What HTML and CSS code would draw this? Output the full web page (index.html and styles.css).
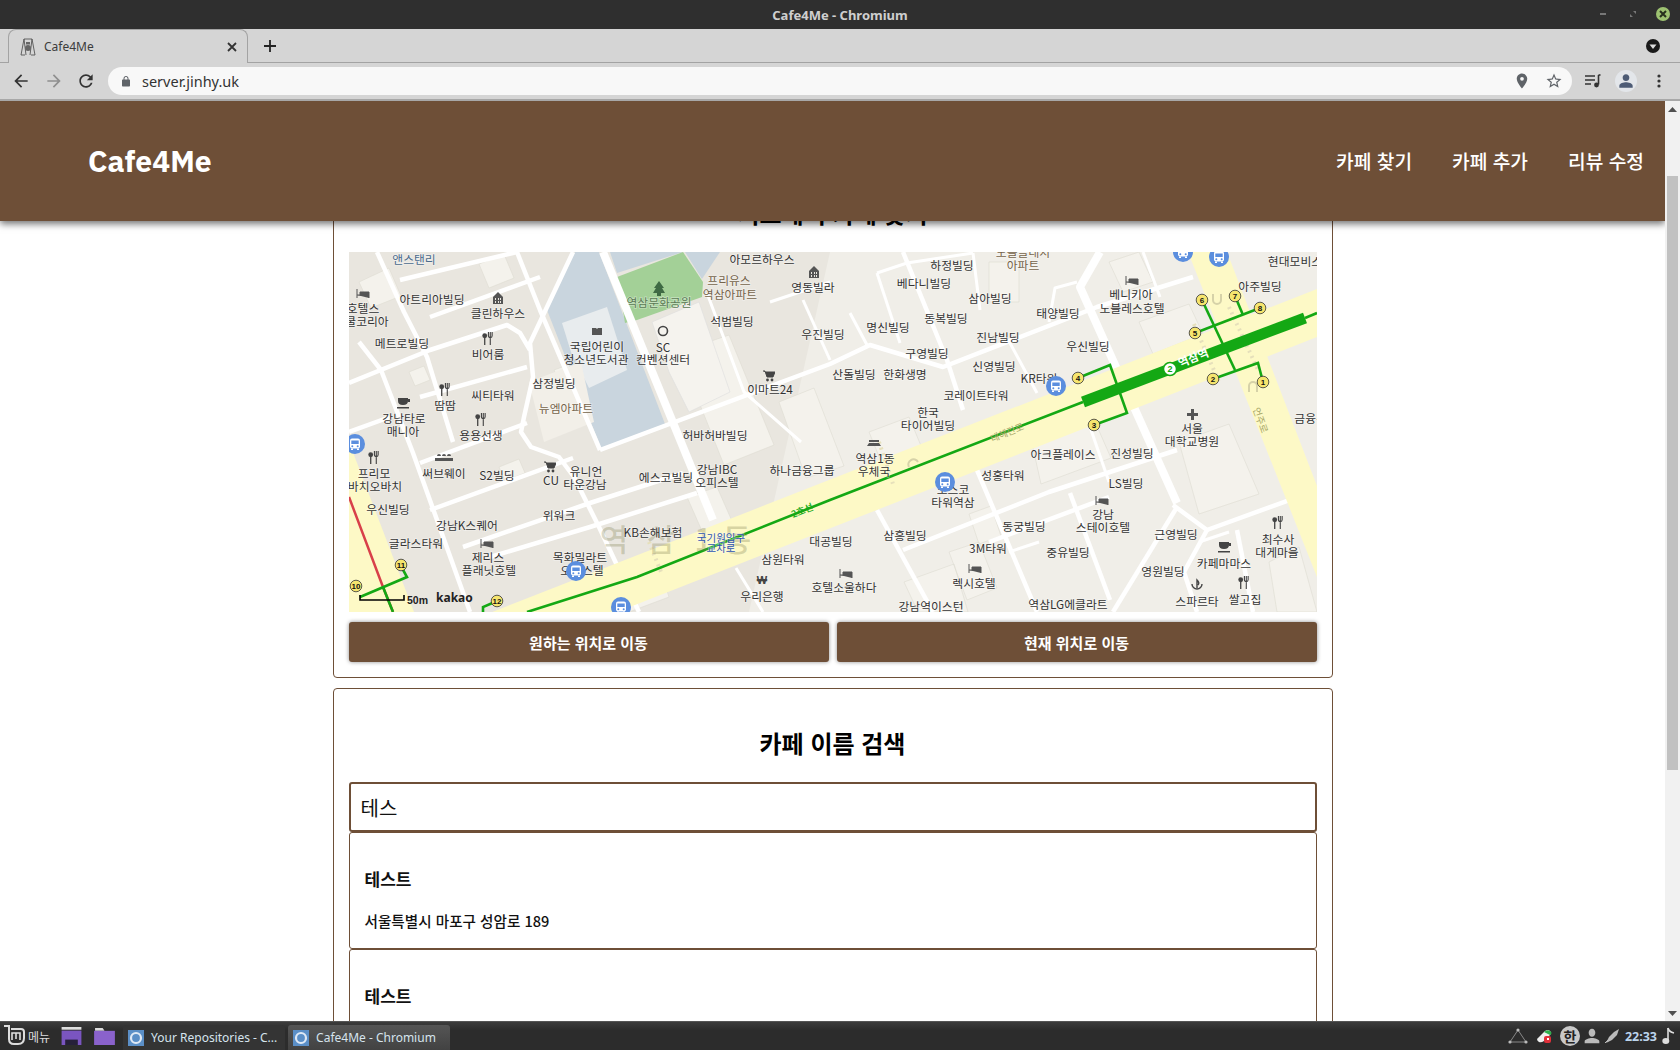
FILE: index.html
```html
<!DOCTYPE html>
<html lang="ko">
<head>
<meta charset="utf-8">
<title>Cafe4Me - Chromium</title>
<link rel="stylesheet" href="styles.css">
</head>
<body>
<div class="desktop">
  <div class="titlebar">
    <span class="title-text">Cafe4Me - Chromium</span>
    <div class="winctl">
      <svg width="14" height="14" viewBox="0 0 14 14"><rect x="4" y="6" width="6" height="2" fill="#777"/></svg>
      <svg width="14" height="14" viewBox="0 0 14 14"><path d="M7 4h3v3zM4 7l3 3H4z" fill="#777"/></svg>
      <svg class="closebtn" width="16" height="16" viewBox="0 0 16 16"><circle cx="8" cy="8" r="7" fill="#9dc271"/><path d="M5 5l6 6M11 5l-6 6" stroke="#26301c" stroke-width="2"/></svg>
    </div>
  </div>

  <div class="tabstrip">
    <div class="tab">
      <svg width="16" height="18" viewBox="0 0 16 18"><path d="M1 17L4 1h8l3 16M1 17h4M11 17h4M4 1l2 16M12 1l-2 16" fill="none" stroke="#555" stroke-width=".9"/><circle cx="8" cy="10" r="3" fill="#666"/><rect x="6" y="4" width="4" height="2.5" fill="#666"/></svg>
      <span class="tab-title">Cafe4Me</span>
      <svg class="tab-x" width="10" height="10" viewBox="0 0 10 10"><path d="M1 1l8 8M9 1l-8 8" stroke="#333" stroke-width="1.8"/></svg>
    </div>
    <svg class="newtab" width="14" height="14" viewBox="0 0 14 14"><path d="M7 1v12M1 7h12" stroke="#222" stroke-width="1.8"/></svg>
    <svg class="tabsearch" width="14" height="14" viewBox="0 0 14 14"><circle cx="7" cy="7" r="7" fill="#1a1a1a"/><path d="M3.5 5.500h7L7 10z" fill="#ddd"/></svg>
  </div>

  <div class="toolbar">
    <svg class="tb-btn" width="20" height="20" viewBox="0 0 24 24"><path d="M20 11H7.83l5.59-5.59L12 4l-8 8 8 8 1.41-1.41L7.83 13H20v-2z" fill="#333"/></svg>
    <svg class="tb-btn fwd" width="20" height="20" viewBox="0 0 24 24"><path d="M12 4l-1.41 1.41L16.17 11H4v2h12.17l-5.58 5.59L12 20l8-8z" fill="#8f8f8f"/></svg>
    <svg class="tb-btn" width="20" height="20" viewBox="0 0 24 24"><path d="M17.65 6.35C16.2 4.9 14.21 4 12 4c-4.42 0-7.99 3.58-7.99 8s3.57 8 7.99 8c3.73 0 6.84-2.55 7.73-6h-2.08c-.82 2.33-3.04 4-5.65 4-3.31 0-6-2.69-6-6s2.69-6 6-6c1.66 0 3.14.69 4.22 1.78L13 11h7V4l-2.35 2.35z" fill="#333"/></svg>
    <div class="omnibox">
      <svg width="12" height="13" viewBox="0 0 24 24"><path d="M18 8h-1V6c0-2.76-2.24-5-5-5S7 3.24 7 6v2H6c-1.1 0-2 .9-2 2v10c0 1.1.9 2 2 2h12c1.1 0 2-.9 2-2V10c0-1.1-.9-2-2-2zM9 6c0-1.66 1.34-3 3-3s3 1.34 3 3v2H9V6z" fill="#5f6368"/></svg>
      <span class="url">server.jinhy.uk</span>
      <svg class="omni-pin" width="18" height="18" viewBox="0 0 24 24"><path d="M12 2C8.13 2 5 5.13 5 9c0 5.25 7 13 7 13s7-7.75 7-13c0-3.87-3.13-7-7-7zm0 9.5a2.5 2.5 0 010-5 2.5 2.5 0 010 5z" fill="#5f6368"/></svg>
      <svg width="18" height="18" viewBox="0 0 24 24"><path d="M22 9.24l-7.19-.62L12 2 9.19 8.63 2 9.24l5.46 4.73L5.82 21 12 17.27 18.18 21l-1.63-7.03L22 9.24zM12 15.4l-3.76 2.27 1-4.28-3.32-2.88 4.38-.38L12 6.1l1.71 4.04 4.38.38-3.32 2.88 1 4.28L12 15.4z" fill="#5f6368"/></svg>
    </div>
    <svg class="tb-queue" width="16" height="14" viewBox="0 0 16 14"><path d="M0 2h10M0 6h10M0 10h6" stroke="#333" stroke-width="1.6"/><path d="M13.5 1v9.5" stroke="#333" stroke-width="1.6"/><path d="M13.5 1h2" stroke="#333" stroke-width="1.6"/><circle cx="11.5" cy="11" r="2.4" fill="#333"/></svg>
    <div class="avatar"><svg width="16" height="16" viewBox="0 0 24 24"><path d="M12 12c2.9 0 5-2.100 5-5s-2.100-5-5-5-5 2.100-5 5 2.100 5 5 5zm0 2c-3.300 0-10 1.700-10 5v3h20v-3c0-3.300-6.700-5-10-5z" fill="#4d5b75"/></svg></div>
    <svg class="tb-dots" width="4" height="14" viewBox="0 0 4 14"><circle cx="2" cy="2" r="1.6" fill="#333"/><circle cx="2" cy="7" r="1.6" fill="#333"/><circle cx="2" cy="12" r="1.6" fill="#333"/></svg>
  </div>

  <div class="viewport">
    <div class="scroller">
      <header class="site-header">
        <div class="logo">Cafe4Me</div>
        <nav class="nav">
          <a class="nav-link">카페 찾기</a>
          <a class="nav-link">카페 추가</a>
          <a class="nav-link">리뷰 수정</a>
        </nav>
      </header>
      <main class="main">
        <section class="card">
          <h2 class="card-title">지도에서 카페 찾기</h2>
          <div class="map">
            <svg class="map-svg" width="968" height="360" viewBox="0 0 968 360">
              <defs>
                <symbol id="bed" viewBox="0 0 14 10"><path d="M1 0v9M1 6h12v3M4 3h9v3H4z" fill="#555" stroke="#555" stroke-width="1"/></symbol>
                <symbol id="fork" viewBox="0 0 14 14"><circle cx="4" cy="4" r="2.6" fill="#444"/><path d="M4 4v10" stroke="#444" stroke-width="1.4"/><path d="M8 0v4q0 2 2 2t2-2V0M10 0v14" fill="none" stroke="#444" stroke-width="1.2"/></symbol>
                <symbol id="cup" viewBox="0 0 14 12"><path d="M1 1h10v3q0 4-5 4t-5-4zM11 2h2v3h-2M0 10h12v1.500H0z" fill="#444"/></symbol>
                <symbol id="bld" viewBox="0 0 10 12"><path d="M0 12V5l5-5 5 5v7z" fill="#555"/><path d="M2 6h1v2H2zM5 6h1v2H5zM7 6h1v2H7zM2 9h1v2H2zM5 9h1v2H5zM7 9h1v2H7z" fill="#e9e6df"/></symbol>
                <symbol id="cart" viewBox="0 0 12 12"><path d="M0 1h2l2 6h6l2-5H3" fill="#444" stroke="#444"/><circle cx="4.500" cy="10" r="1.400" fill="#444"/><circle cx="9" cy="10" r="1.400" fill="#444"/></symbol>
                <symbol id="bus" viewBox="0 0 20 20"><circle cx="10" cy="10" r="10" fill="#5b8ede"/><rect x="5" y="4.500" width="10" height="10" rx="2" fill="#fff"/><rect x="6.300" y="6.500" width="7.400" height="3.500" fill="#5b8ede"/><circle cx="7.300" cy="12.300" r="1" fill="#5b8ede"/><circle cx="12.700" cy="12.300" r="1" fill="#5b8ede"/><path d="M6 14.500h2v1.500H6zM12 14.500h2v1.500h-2z" fill="#fff"/></symbol>
              </defs>
              <rect class="m-ground" width="968" height="360"/>
              <path class="m-ground2" d="M481 0H968V360H400Z"/>
              <!-- plots -->
              <g class="m-plot">
                <path d="M330 100l50-17 45 110-50 20zM430 150l35-14 30 78-38 12zM520 180l40-15 25 60-40 16zM10 30l30-14 12 28-30 12zM130 12l25-10 10 24-25 10zM205 118l22-8 8 18-22 8zM338 245l30-10 15 34-30 10zM790 70l50-18 14 30-50 20zM600 300l30-10 18 46-30 12zM680 178l60-22 22 50-70 26zM830 190l50-18 30 70-60 20zM555 330l50-18 14 48h-50zM640 10h30v40h-30zM760 10l30-10 14 30-30 10zM920 310l30-15 18 65h-40zM620 262l22-8 10 30-22 8zM60 120l15-6 6 14-15 6zM150 215l20-8 6 14-20 8zM270 330l40-15 10 30-40 15z"/>
              </g>
              <!-- water-ish and park -->
              <path class="m-blue" d="M226 0H250L316 172 252 196 198 58ZM261 0H334L268 21ZM336 0H371L353 27Z"/>
              <path class="m-green" d="M268 25L334 0 354 30 353 45 288 68 276 71Z"/>
              <path class="m-lib" d="M213 71L258 55 278 118 240 136 222 100Z"/>
              <path class="m-white-plot" d="M303 70L350 50 381 140 340 160 320 120Z"/>
              <path class="m-ivory" d="M180 130L232 110 245 170 195 190Z"/>
              <!-- roads -->
              <g class="m-road w6">
                <path d="M28 0L55 60 78 105 104 190"/>
                <path d="M10 90L32 118 64 201 121 360"/>
                <path d="M168 0L191 58 251 198"/>
                <path d="M224 0L181 91 184 125 175 165 172 180 182 195 210 205 225 225 250 275 290 360"/>
                <path d="M0 131L81 98 158 73 171 81 181 98"/>
                <path d="M71 211L178 171"/>
                <path d="M251 198L481 112 521 93 594 115 748 55 844 25"/>
                <path d="M81 258L224 206"/>
                <path d="M114 295L241 251 334 221"/>
                <path d="M141 305L241 275 348 241"/>
                <path d="M71 145L178 115"/>
                <path d="M51 28L168 0"/>
                <path d="M81 65L191 25"/>
                <path d="M0 180L41 165"/>
                <path d="M554 0L598 108 614 158"/>
                <path d="M528 258L584 360"/>
                <path d="M628 218L688 360"/>
                <path d="M554 298L700 240 828 198"/>
                <path d="M824 253L858 278 968 238"/>
                <path d="M828 255L764 360"/>
                <path d="M858 278L835 320 848 360"/>
                <path d="M888 278L904 360"/>
                <path d="M721 241L761 348"/>
                <path d="M640 290L760 245"/>
              </g>
              <g class="m-road w9">
                <path d="M254 0L364 268"/>
                <path d="M751 0L731 35 828 251"/>
              </g>
              <g class="m-road w4">
                <path d="M358 41L395 140 452 190"/>
                <path d="M421 50L481 30"/>
                <path d="M454 48L481 108"/>
                <path d="M387 316L414 360"/>
                <path d="M528 21L558 11 624 1"/>
                <path d="M528 21L551 91"/>
                <path d="M501 61L518 93"/>
                <path d="M624 1L631 58"/>
                <path d="M661 91L688 141"/>
                <path d="M794 0L811 45"/>
                <path d="M700 70L706 36 728 30"/>
                <path d="M740 172L760 230"/>
                <path d="M850 290L880 280"/>
                <path d="M660 300L690 290"/>
              </g>
              <!-- avenues -->
              <path class="m-ave" d="M105 375L968 37V85L230 375Z"/>
              <path class="m-ave" d="M839 0H878L968 234V325Z"/>
              <path class="m-ave" d="M0 190L65 360H0Z"/>
              <path class="m-zebra" d="M845 72L870 130M880 55L910 120M530 190L545 235M300 290L312 320"/>
              <path class="m-uturn" d="M864 42v6a4 4 0 008 0v-6M900 140v-6a4 4 0 018 0v6M560 215a5 5 0 019-5"/>
              <!-- rail -->
              <path class="m-red" d="M0 245L34 335 44 360"/>
              <g class="m-line">
                <path d="M178 360L288 325 481 248 734 150"/>
                <path d="M956 66L968 61"/>
                <path d="M134 360V355L148 349"/>
                <path d="M34 335L44 360"/>
                <path d="M11 345L58 325 53 316"/>
                <path d="M729 126L761 113 778 161 745 173"/>
                <path d="M846 81L911 56"/>
                <path d="M853 48L886 118"/>
                <path d="M886 44L894 63"/>
                <path d="M864 127L909 111 914 130"/>
              </g>
              <path class="m-thick" d="M734 150L956 66"/>
              <circle class="m-st" cx="821" cy="117" r="6.500"/>
              <text class="m-stn" x="821" y="117">2</text>
              <text class="m-stname" x="844" y="105" transform="rotate(-22 844 105)">역삼역</text>
              <!-- exits -->
              <g class="m-exit">
                <circle cx="914" cy="130" r="5.800"/><circle cx="864" cy="127" r="5.800"/><circle cx="745" cy="173" r="5.800"/><circle cx="729" cy="126" r="5.800"/><circle cx="846" cy="81" r="5.800"/><circle cx="853" cy="48" r="5.800"/><circle cx="886" cy="44" r="5.800"/><circle cx="911" cy="56" r="5.800"/><circle cx="7" cy="334" r="5.800"/><circle cx="52" cy="313" r="5.800"/><circle cx="148" cy="349" r="5.800"/>
              </g>
              <g class="m-exitnum">
                <text x="914" y="130">1</text><text x="864" y="127">2</text><text x="745" y="173">3</text><text x="729" y="126">4</text><text x="846" y="81">5</text><text x="853" y="48">6</text><text x="886" y="44">7</text><text x="911" y="56">8</text><text x="7" y="334">10</text><text x="52" y="313">11</text><text x="148" y="349">12</text>
              </g>
              <!-- district watermark -->
              <text class="m-district" x="265" y="299">역</text><text class="m-district" x="312" y="299">삼</text><text class="m-district" x="354" y="299">1</text><text class="m-district" x="388" y="299">동</text>
              <!-- POI icons -->
              <use href="#bed" x="7" y="37" width="14" height="10"/><use href="#bed" x="776" y="24" width="14" height="10"/><use href="#bed" x="131" y="287" width="14" height="10"/><use href="#bed" x="746" y="244" width="14" height="10"/><use href="#bed" x="619" y="312" width="14" height="10"/><use href="#bed" x="490" y="317" width="14" height="10"/>
              <use href="#fork" x="132" y="80" width="13" height="13"/><use href="#fork" x="89" y="131" width="13" height="13"/><use href="#fork" x="125" y="161" width="13" height="13"/><use href="#fork" x="18" y="199" width="13" height="13"/><use href="#fork" x="922" y="264" width="13" height="13"/><use href="#fork" x="888" y="324" width="13" height="13"/>
              <use href="#cup" x="48" y="145" width="14" height="12"/><use href="#cup" x="869" y="289" width="14" height="12"/>
              <use href="#bld" x="144" y="40" width="10" height="12"/><use href="#bld" x="460" y="14" width="10" height="12"/>
              <use href="#cart" x="414" y="118" width="12" height="12"/><use href="#cart" x="195" y="209" width="12" height="12"/>
              <path class="m-icon-green" d="M310 29l5 7h-2l3 5h-4v3h-4v-3h-4l3-5h-2z"/>
              <path class="m-icon" d="M243 76h4l1 1 1-1h4v7h-10z"/>
              <circle class="m-icon-ring" cx="314" cy="79" r="4.500"/>
              <path class="m-icon" d="M86 206h18v3H86zM88 204a2 2 0 014 0zM93 204a2 2 0 014 0zM98 204a2 2 0 014 0z"/>
              <path class="m-icon" d="M842 157h3v4h4v3h-4v4h-3v-4h-4v-3h4z"/>
              <path class="m-icon" d="M518 194h14l-2-3h-10zM520 188h10v2h-10z"/>
              <text class="m-won" x="413" y="332">₩</text>
              <path class="m-spa" d="M843 332a5 5 0 0010 0M848 336v-8q3 3 1 5"/>
              <!-- labels -->
              <g class="m-label">
                <text class="blue" x="65" y="6">앤스탠리</text>
                <text x="413" y="6">아모르하우스</text>
                <text class="brown" x="380" y="27">프리유스</text>
                <text class="brown" x="381" y="41">역삼아파트</text>
                <text x="464" y="34">영동빌라</text>
                <text class="park" x="310" y="49">역삼문화공원</text>
                <text x="14" y="55">호텔스</text>
                <text x="18" y="68">쿨코리아</text>
                <text x="83" y="46">아트리아빌딩</text>
                <text x="149" y="60">클린하우스</text>
                <text x="383" y="68">석범빌딩</text>
                <text x="53" y="90">메트로빌딩</text>
                <text x="139" y="101">비어룸</text>
                <text x="474" y="81">우진빌딩</text>
                <text x="248" y="93">국립어린이</text>
                <text x="247" y="106">청소년도서관</text>
                <text x="314" y="94">SC</text>
                <text x="314" y="106">컨벤션센터</text>
                <text x="205" y="130">삼정빌딩</text>
                <text x="421" y="136">이마트24</text>
                <text x="144" y="142">씨티타워</text>
                <text x="96" y="152">땀땀</text>
                <text class="brown" x="217" y="155">뉴엠아파트</text>
                <text x="55" y="165">강남타로</text>
                <text x="54" y="178">매니아</text>
                <text x="132" y="182">용용선생</text>
                <text x="366" y="182">허바허바빌딩</text>
                <text x="25" y="220">프리모</text>
                <text x="26" y="233">바치오바치</text>
                <text x="95" y="220">써브웨이</text>
                <text x="148" y="222">S2빌딩</text>
                <text x="202" y="227">CU</text>
                <text x="237" y="218">유니언</text>
                <text x="236" y="231">타운강남</text>
                <text x="317" y="224">에스코빌딩</text>
                <text x="368" y="216">강남IBC</text>
                <text x="368" y="229">오피스텔</text>
                <text x="453" y="217">하나금융그룹</text>
                <text x="39" y="256">우신빌딩</text>
                <text x="210" y="262">위워크</text>
                <text x="118" y="272">강남K스퀘어</text>
                <text x="304" y="279">KB손해보험</text>
                <text x="67" y="290">글라스타워</text>
                <text x="139" y="304">제리스</text>
                <text x="140" y="317">플래닛호텔</text>
                <text x="231" y="304">목화밀라트</text>
                <text x="233" y="317">오피스텔</text>
                <text class="blue2" x="372" y="285">국기원입구</text>
                <text class="blue2" x="372" y="295">교차로</text>
                <text x="434" y="306">삼원타워</text>
                <text x="482" y="288">대공빌딩</text>
                <text x="413" y="343">우리은행</text>
                <text x="495" y="334">호텔소울하다</text>
                <text x="603" y="12">하정빌딩</text>
                <text class="brown" x="674" y="-1">노블클래시</text>
                <text class="brown" x="674" y="12">아파트</text>
                <text x="946" y="8">현대모비스</text>
                <text x="575" y="30">베다니빌딩</text>
                <text x="641" y="45">삼아빌딩</text>
                <text x="911" y="33">아주빌딩</text>
                <text x="782" y="41">베니키아</text>
                <text x="783" y="55">노블레스호텔</text>
                <text x="709" y="60">태양빌딩</text>
                <text x="597" y="65">동복빌딩</text>
                <text x="539" y="74">명신빌딩</text>
                <text x="649" y="84">진남빌딩</text>
                <text x="739" y="93">우신빌딩</text>
                <text x="578" y="100">구영빌딩</text>
                <text x="505" y="121">산돌빌딩</text>
                <text x="556" y="121">한화생명</text>
                <text x="645" y="113">신영빌딩</text>
                <text x="690" y="125">KR타워</text>
                <text x="627" y="142">코레이트타워</text>
                <text x="967" y="165">금융센터</text>
                <text x="579" y="159">한국</text>
                <text x="579" y="172">타이어빌딩</text>
                <text x="843" y="175">서울</text>
                <text x="843" y="188">대학교병원</text>
                <text x="714" y="201">아크플레이스</text>
                <text x="783" y="200">진성빌딩</text>
                <text x="526" y="205">역삼1동</text>
                <text x="525" y="218">우체국</text>
                <text x="654" y="222">성홍타워</text>
                <text x="777" y="230">LS빌딩</text>
                <text x="604" y="236">포스코</text>
                <text x="604" y="249">타워역삼</text>
                <text x="754" y="261">강남</text>
                <text x="754" y="274">스테이호텔</text>
                <text x="675" y="273">동궁빌딩</text>
                <text x="556" y="282">삼흥빌딩</text>
                <text x="827" y="281">근영빌딩</text>
                <text x="929" y="286">최수사</text>
                <text x="928" y="299">대게마을</text>
                <text x="639" y="295">3M타워</text>
                <text x="719" y="299">중유빌딩</text>
                <text x="875" y="310">카페마마스</text>
                <text x="814" y="318">영원빌딩</text>
                <text x="625" y="330">렉시호텔</text>
                <text x="848" y="348">스파르타</text>
                <text x="896" y="346">쌀고집</text>
                <text x="582" y="353">강남역이스턴</text>
                <text x="719" y="351">역삼LG에클라트</text>
              </g>
              <text class="m-rail" x="453" y="258" transform="rotate(-22 453 258)">2호선</text>
              <text class="m-road-name" x="658" y="180" transform="rotate(-22 658 180)">테헤란로</text>
              <text class="m-road-name" x="912" y="168" transform="rotate(70 912 168)">언주로</text>
              <!-- bus stops -->
              <use href="#bus" x="-4" y="182" width="20" height="20"/><use href="#bus" x="217" y="309" width="20" height="20"/><use href="#bus" x="262" y="345" width="20" height="20"/><use href="#bus" x="697" y="124" width="20" height="20"/><use href="#bus" x="586" y="220" width="20" height="20"/><use href="#bus" x="824" y="-10" width="20" height="20"/><use href="#bus" x="860" y="-5" width="20" height="20"/>
              <!-- scale -->
              <path class="m-scale" d="M11 343v5h44v-5"/>
              <text class="m-scale-t" x="58" y="352">50m</text>
              <text class="m-kakao" x="87" y="350">kakao</text>
            </svg>
          </div>
          <div class="btn-row">
            <button class="btn">원하는 위치로 이동</button>
            <button class="btn">현재 위치로 이동</button>
          </div>
        </section>

        <section class="card">
          <h2 class="card-title">카페 이름 검색</h2>
          <div class="search-input">테스</div>
          <div class="result">
            <p class="result-name">테스트</p>
            <p class="result-addr">서울특별시 마포구 성암로 189</p>
          </div>
          <div class="result">
            <p class="result-name">테스트</p>
            <p class="result-addr">서울특별시 마포구 성암로 189</p>
          </div>
        </section>
      </main>
    </div>
    <div class="scrollbar">
      <svg class="sb-up" width="9" height="5" viewBox="0 0 9 5"><path d="M0 5L4.500 0 9 5z" fill="#505050"/></svg>
      <div class="sb-thumb"></div>
      <svg class="sb-down" width="9" height="5" viewBox="0 0 9 5"><path d="M0 0L4.500 5 9 0z" fill="#505050"/></svg>
    </div>
  </div>

  <div class="taskbar">
    <svg class="mint" width="24" height="24" viewBox="0 0 24 24"><path d="M1 2h5v13q0 5 5 5h4q6 0 6-6V8q0-3-3-3H8" fill="none" stroke="#ddd" stroke-width="2"/><path d="M9 16V9h8v7M13 9v6" fill="none" stroke="#ddd" stroke-width="1.600"/></svg>
    <span class="menu-label">메뉴</span>
    <svg class="launch1" width="21" height="18" viewBox="0 0 22 20"><rect width="22" height="3" y="0" fill="#ddd"/><rect y="4" width="22" height="16" fill="#7a55c0"/><rect x="4" y="14" width="14" height="6" fill="#26203a"/></svg>
    <svg class="launch2" width="21" height="17" viewBox="0 0 22 18"><path d="M1 3V0h8l2 3z" fill="#ddd"/><rect y="3" width="22" height="15" fill="#8a62cc"/></svg>
    <div class="task task-1"><svg width="16" height="16" viewBox="0 0 16 16"><rect width="16" height="16" fill="#5b8fc7"/><circle cx="8" cy="8" r="5" fill="none" stroke="#dfe9f5" stroke-width="2.200"/></svg><span class="task-text">Your Repositories - C...</span></div>
    <div class="task task-2"><svg width="16" height="16" viewBox="0 0 16 16"><rect width="16" height="16" fill="#5b8fc7"/><circle cx="8" cy="8" r="5" fill="none" stroke="#dfe9f5" stroke-width="2.200"/></svg><span class="task-text">Cafe4Me - Chromium</span></div>
    <div class="tray">
      <svg class="tray-wide" width="20" height="18" viewBox="0 0 20 18"><path d="M10 3L2 15h16z" fill="none" stroke="#888" stroke-width="1"/><circle cx="10" cy="3" r="1.600" fill="#bbb"/><circle cx="2" cy="15" r="1.600" fill="#bbb"/><circle cx="18" cy="15" r="1.600" fill="#bbb"/></svg>
      <svg class="tray-wide" width="16" height="16" viewBox="0 0 16 16"><path d="M1 11L9 3q3-2 5 0t0 4l-6 6q-3 2-5 1t-2-3z" fill="#eee"/><path d="M8 4q3-3 6-1t0 4z" fill="#2db04c"/><rect x="8" y="8" width="7" height="7" rx="2" fill="#e0303a"/><rect x="11" y="10" width="2" height="2" fill="#fff"/></svg>
      <span class="ime">한</span>
      <svg width="16" height="16" viewBox="0 0 24 24"><path d="M12 13c3 0 5-2.600 5-6s-2-6-5-6-5 2.600-5 6 2 6 5 6zm0 2c-4 0-11 2-11 5v3h22v-3c0-3-7-5-11-5z" fill="#bbb"/></svg>
      <svg width="16" height="16" viewBox="0 0 16 16"><path d="M15 1L10 4 5 9 2 15l6-3 5-5z" fill="#bbb"/><path d="M1 15l3-3" stroke="#bbb"/></svg>
      <span class="clock">22:33</span>
      <svg width="14" height="18" viewBox="0 0 14 18"><path d="M6 1v12" stroke="#ddd" stroke-width="1.600"/><path d="M6 1q1 4 6 5" fill="none" stroke="#ddd" stroke-width="1.600"/><ellipse cx="3.800" cy="14" rx="3.500" ry="3" fill="#ddd"/></svg>
    </div>
  </div>
</div>
</body>
</html>
```
FILE: styles.css
```css
* { box-sizing: border-box; }
html, body { margin: 0; padding: 0; overflow: hidden; }
body { font-family: "Noto Sans CJK KR", "Noto Sans", sans-serif; background: #fff; }
.desktop { width: 1680px; height: 1050px; display: flex; flex-direction: column; overflow: hidden; }

/* window title */
.titlebar { height: 29px; background: #2f2f2f; display: flex; align-items: center; justify-content: center; position: relative; flex: none; }
.title-text { font: 700 13px "Noto Sans", sans-serif; color: #cfcfcf; }
.winctl { position: absolute; right: 9px; top: 6px; display: flex; gap: 16px; align-items: center; }
.closebtn { margin-left: -1px; }

/* tab strip */
.tabstrip { height: 34px; flex: none; background: #d5d5d5; border-bottom: 1px solid #a3a3a3; display: flex; align-items: center; padding-left: 8px; padding-right: 20px; }
.tab { width: 240px; height: 34px; margin-bottom: -1px; background: #d5d5d5; border: 1px solid #a3a3a3; border-bottom: 0; border-radius: 8px 8px 0 0; display: flex; align-items: center; padding-left: 11px; padding-right: 10px; gap: 8px; }
.tab-title { font: 400 12px "Noto Sans", sans-serif; color: #3c3c3c; flex: 1; }
.newtab { margin-left: 15px; }
.tabsearch { margin-left: auto; }

/* toolbar */
.toolbar { height: 38px; flex: none; background: #d5d5d5; border-bottom: 2px solid #a8a8a8; display: flex; align-items: center; padding-left: 11px; }
.tb-btn { margin-right: 12px; }
.fwd { margin-left: 1px; }
.omnibox { width: 1464px; height: 28px; border-radius: 14px; background: #f8f8f8; display: flex; align-items: center; padding-left: 12px; padding-right: 9px; gap: 10px; }
.url { font: 400 14.5px "Noto Sans", sans-serif; color: #333; flex: 1; }
.omni-pin { margin-right: 4px; }
.tb-queue { margin-left: 13px; }
.avatar { width: 22px; height: 22px; border-radius: 50%; background: #e3e6ea; margin-left: 14px; display: flex; align-items: center; justify-content: center; }
.tb-dots { margin-left: 20px; }

/* page viewport */
.viewport { flex: 1; display: flex; min-height: 0; }
.scroller { flex: 1; position: relative; overflow: hidden; background: #fff; }
.site-header { position: absolute; left: 0; right: 0; top: 0; height: 120px; background: #6e4f37; display: flex; align-items: center; justify-content: space-between; padding: 0 21px 0 88px; box-shadow: 0 3px 7px rgba(0,0,0,.55); z-index: 2; }
.logo { font: 700 30px "IBM Plex Sans", "Noto Sans", sans-serif; color: #fff; margin-bottom: 2px; }
.nav { display: flex; gap: 40px; }
.nav-link { font-size: 19.2px; font-weight: 500; color: #fff; }
.main { width: 1000px; margin: 0 auto; padding-top: 57px; display: flex; flex-direction: column; gap: 10px; }

.card { border: 1px solid #6e4f37; border-radius: 4px; padding: 15px; background: #fff; }
.card-title { margin: 23px 0 23px; height: 32px; line-height: 32px; font-size: 24px; font-weight: 700; text-align: center; color: #000; }
.map { height: 360px; overflow: hidden; }
.map-svg { display: block; }
.btn-row { margin-top: 10px; display: flex; gap: 8px; }
.btn { flex: 1; height: 40px; border: 0; border-radius: 3px; background: #6e4f37; color: #fff; font: 700 15px "Noto Sans CJK KR", sans-serif; box-shadow: 0 0 4px rgba(0,0,0,.45); }

.search-input { height: 50px; border: 2px solid #6e4f37; border-radius: 3px; padding: 0 10px; display: flex; align-items: center; font-size: 20px; color: #111; }
.result { height: 117px; border: 1px solid #6e4f37; border-radius: 3px; padding: 0 15px; }
.result-name { margin: 33px 0 0; font-size: 17px; line-height: 26px; font-weight: 700; color: #111; }
.result-addr { margin: 18px 0 0; font-size: 14.6px; line-height: 22px; font-weight: 500; color: #111; }

/* scrollbar */
.scrollbar { width: 15px; flex: none; background: #f1f1f1; position: relative; display: flex; flex-direction: column; align-items: center; }
.sb-up { margin-top: 6px; }
.sb-thumb { width: 11px; height: 594px; background: #c1c1c1; margin-top: 64px; }
.sb-down { margin-top: auto; margin-bottom: 5px; }

/* map */
.m-ground { fill: #e9e6df; }
.m-ground2 { fill: #f0eee8; }
.m-plot path { fill: #f4f2ec; stroke: #dedbd2; stroke-width: .6; }
.m-blue { fill: #c9d5de; }
.m-green { fill: #a3d097; }
.m-lib { fill: #e8ecee; }
.m-white-plot { fill: #f5f3ee; stroke: #ddd; stroke-width: .6; }
.m-ivory { fill: #f2efe8; }
.m-road { fill: none; stroke: #fff; stroke-linejoin: round; }
.w4 { stroke-width: 3; }
.w6 { stroke-width: 4.5; }
.w9 { stroke-width: 8; }
.m-ave { fill: #fdf9c6; }
.m-zebra { fill: none; stroke: #e6e0bb; stroke-width: 4; stroke-dasharray: 2 4; }
.m-uturn { fill: none; stroke: #d6d2a8; stroke-width: 2; }
.m-red { fill: none; stroke: #d8404a; stroke-width: 2.5; }
.m-line path { fill: none; stroke: #14a814; stroke-width: 2.6; }
.m-thick { stroke: #14a814; stroke-width: 11; fill: none; }
.m-st { fill: #fff; stroke: #14a814; stroke-width: 1.5; }
.m-stn { font: 700 9px "Liberation Sans", sans-serif; fill: #14a814; text-anchor: middle; dominant-baseline: central; }
.m-stname { font: 700 11.5px "Noto Sans CJK KR", sans-serif; fill: #fff; text-anchor: middle; dominant-baseline: central; }
.m-exit circle { fill: #f6e56e; stroke: #333; stroke-width: .8; }
.m-exitnum text { font: 700 8px "Liberation Sans", sans-serif; fill: #111; text-anchor: middle; dominant-baseline: central; }
.m-district { font: 500 31px "Noto Sans CJK KR", sans-serif; fill: rgba(120,120,70,.28); text-anchor: middle; }
.m-label text { font: 400 11.8px "Noto Sans CJK KR", sans-serif; fill: #333; text-anchor: middle; dominant-baseline: central; paint-order: stroke; stroke: rgba(255,255,255,.4); stroke-width: 1.5px; }
.m-label .blue { fill: #4a6a8c; }
.m-label .blue2 { fill: #2f55b0; font-size: 10.5px; }
.m-label .brown { fill: #75634a; }
.m-label .park { fill: #5b7a55; }
.m-rail { font: 500 9.5px "Noto Sans CJK KR", sans-serif; fill: #14a814; text-anchor: middle; dominant-baseline: central; }
.m-road-name { font: 400 9.5px "Noto Sans CJK KR", sans-serif; fill: #a5a565; text-anchor: middle; dominant-baseline: central; }
.m-icon { fill: #555; }
.m-icon-green { fill: #3f6a44; }
.m-icon-ring { fill: none; stroke: #444; stroke-width: 1.6; }
.m-spa { fill: none; stroke: #444; stroke-width: 1.4; }
.m-won { font: 700 11px "Liberation Sans", sans-serif; fill: #444; text-anchor: middle; }
.m-scale { fill: none; stroke: #000; stroke-width: 1.6; }
.m-scale-t { font: 700 10.5px "Liberation Sans", sans-serif; fill: #222; }
.m-kakao { font: 700 12px "Noto Sans", sans-serif; fill: #222; }

/* taskbar */
.taskbar { height: 29px; flex: none; background: linear-gradient(#3c3c3c, #2c2c2c 30%, #2c2c2c); border-top: 1px solid #555; display: flex; align-items: center; position: relative; padding-left: 3px; }
.menu-label { font-size: 12px; color: #ddd; margin-left: 1px; }
.launch1 { margin-left: 11px; }
.launch2 { margin-left: 12px; margin-right: 8px; }
.task { height: 25px; align-self: flex-end; width: 162px; border-radius: 3px 3px 0 0; display: flex; align-items: center; gap: 7px; padding-left: 5px; margin-right: 3px; }
.task-1 { background: #343434; }
.task-2 { background: linear-gradient(#555, #424242); }
.task-text { font: 400 12px "Noto Sans", sans-serif; color: #d6e4ee; white-space: nowrap; }
.tray { margin-left: auto; padding-right: 4px; display: flex; align-items: center; gap: 4px; }
.tray-wide { margin-right: 4px; }
.ime { width: 20px; height: 20px; border-radius: 50%; background: #c9c9c9; color: #222; font-size: 14px; font-weight: 700; display: flex; align-items: center; justify-content: center; }
.clock { font: 700 12.5px "Noto Sans", sans-serif; color: #bcd4ec; margin: 0 1px; }
```
